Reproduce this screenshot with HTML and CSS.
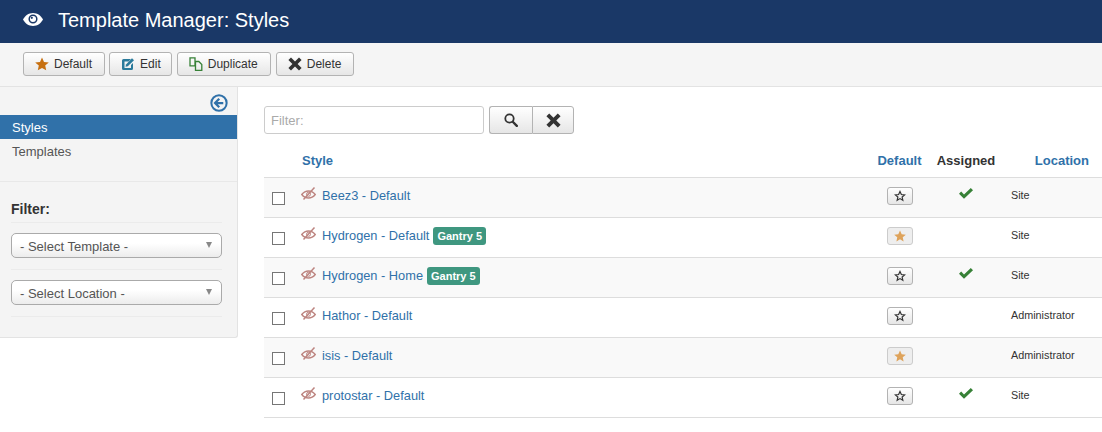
FILE: index.html
```html
<!DOCTYPE html>
<html>
  <head>
    <title>Template Manager: Styles</title>
    <link rel="stylesheet" href="styles.css">
  </head>
  <body>
    <svg class="defs" width="0" height="0">
      <symbol id="i-eye" viewBox="0 0 20 13">
        <path fill="#fff" d="M10 0C5.500 0 2 2.800 0 6.500 2 10.200 5.500 13 10 13s8-2.800 10-6.500C18 2.800 14.500 0 10 0z"/>
        <circle cx="10" cy="6" r="3.800" fill="none" stroke="#1a3867" stroke-width="1.500"/>
        <circle cx="8.800" cy="4.800" r="1.100" fill="#1a3867"/>
      </symbol>
      <symbol id="i-eye-off" viewBox="0 0 15 13">
        <g fill="none" stroke="currentColor">
          <path stroke-width="1.500" d="M.8 7.500C2.500 5.300 4.800 4 7.500 4S12.500 5.300 14.200 7.500C12.500 9.700 10.200 11 7.500 11S2.500 9.700 .8 7.500z"/>
          <circle cx="7.500" cy="7.300" r="2" stroke-width="1"/>
          <path stroke-width="1.500" d="M2.500 12.500 13.500.5"/>
        </g>
      </symbol>
      <symbol id="i-star" viewBox="0 0 14 14">
        <path fill="currentColor" d="M7 .5l2 4.400 4.800.5-3.600 3.200 1 4.700L7 10.900l-4.200 2.400 1-4.700L.2 5.400 5 4.900z"/>
      </symbol>
      <symbol id="i-star-o" viewBox="0 0 14 14">
        <path fill="none" stroke="currentColor" stroke-width="1.400" d="M7 1.800l1.600 3.500 3.800.4-2.900 2.500.8 3.700L7 10l-3.300 1.900.8-3.700-2.900-2.500 3.800-.4z"/>
      </symbol>
      <symbol id="i-times" viewBox="0 0 14 14">
        <path fill="currentColor" d="M3 .4 7 4.400l4-4 2.600 2.600-4 4 4 4L11 13.600l-4-4-4 4L.4 11l4-4-4-4z"/>
      </symbol>
      <symbol id="i-check" viewBox="0 0 14 11">
        <path fill="currentColor" d="M5 10.800 0 5.800l2.200-2.200L5 6.400 11.800 0 14 2.200z"/>
      </symbol>
    </svg>

    <header class="title-bar">
      <svg class="title-icon"><use href="#i-eye"/></svg>
      <h1>Template Manager: Styles</h1>
    </header>

    <div class="toolbar">
      <button class="btn"><svg class="ic ic-orange"><use href="#i-star"/></svg>Default</button>
      <button class="btn btn-edit">
        <svg class="ic ic-teal" viewBox="0 0 14 14">
          <path fill="currentColor" d="M2.500 2H10L7.500 4.500H3.500v6.500H10V8l2-2v5.500a1.500 1.500 0 0 1-1.500 1.500h-8A1.500 1.500 0 0 1 1 11.500v-8A1.500 1.500 0 0 1 2.500 2z"/>
          <path fill="currentColor" d="M5 7.500 11 1.200l2 2-6.200 6.100-2.300.4z"/>
        </svg>Edit
      </button>
      <button class="btn btn-dup">
        <svg class="ic ic-green" viewBox="0 0 14 14">
          <path fill="none" stroke="currentColor" stroke-width="1.300" d="M1 .9h5v8H1zM6.500 4.500h3.300l3 3v5.800H6.500z"/>
        </svg>Duplicate
      </button>
      <button class="btn btn-del"><svg class="ic"><use href="#i-times"/></svg>Delete</button>
    </div>

    <div class="page">
      <aside class="sidebar">
        <div class="collapse-row">
          <svg class="collapse-icon" viewBox="0 0 16 16">
            <circle cx="8" cy="8" r="6.800" fill="none" stroke="currentColor" stroke-width="1.800"/>
            <path fill="none" stroke="currentColor" stroke-width="2" d="M8.200 4.200 4.500 8l3.700 3.800M4.800 8h7"/>
          </svg>
        </div>
        <nav class="side-nav">
          <a class="side-link active">Styles</a>
          <a class="side-link">Templates</a>
        </nav>
        <div class="side-filter">
          <h4>Filter:</h4>
          <div class="select-wrap"><div class="fake-select">- Select Template -</div></div>
          <div class="select-wrap"><div class="fake-select">- Select Location -</div></div>
        </div>
      </aside>

      <main class="content">
        <div class="search-row">
          <input class="search-input" type="text" placeholder="Filter:">
          <div class="btn-group">
            <button class="btn-square">
              <svg class="ic-search" viewBox="0 0 14 14">
                <circle cx="5.500" cy="5.500" r="4.200" fill="none" stroke="currentColor" stroke-width="1.800"/>
                <path stroke="currentColor" stroke-width="2.400" stroke-linecap="round" d="M9 9l3.800 3.800"/>
              </svg>
            </button>
            <button class="btn-square"><svg class="ic-clear"><use href="#i-times"/></svg></button>
          </div>
        </div>

        <table class="styles-table">
          <thead>
            <tr>
              <th class="col-check"></th>
              <th class="col-style"><a>Style</a></th>
              <th class="col-default"><a>Default</a></th>
              <th class="col-assigned">Assigned</th>
              <th class="col-location"><a>Location</a></th>
            </tr>
          </thead>
          <tbody>
            <tr>
              <td><span class="check"></span></td>
              <td class="name"><div class="name-row"><svg class="eye-off"><use href="#i-eye-off"/></svg><a>Beez3 - Default</a></div></td>
              <td class="center"><span class="star-btn"><svg><use href="#i-star-o"/></svg></span></td>
              <td class="center"><svg class="tick"><use href="#i-check"/></svg></td>
              <td class="location">Site</td>
            </tr>
            <tr>
              <td><span class="check"></span></td>
              <td class="name"><div class="name-row"><svg class="eye-off"><use href="#i-eye-off"/></svg><a>Hydrogen - Default</a><span class="badge">Gantry 5</span></div></td>
              <td class="center"><span class="star-btn on"><svg><use href="#i-star"/></svg></span></td>
              <td class="center"></td>
              <td class="location">Site</td>
            </tr>
            <tr>
              <td><span class="check"></span></td>
              <td class="name"><div class="name-row"><svg class="eye-off"><use href="#i-eye-off"/></svg><a>Hydrogen - Home</a><span class="badge">Gantry 5</span></div></td>
              <td class="center"><span class="star-btn"><svg><use href="#i-star-o"/></svg></span></td>
              <td class="center"><svg class="tick"><use href="#i-check"/></svg></td>
              <td class="location">Site</td>
            </tr>
            <tr>
              <td><span class="check"></span></td>
              <td class="name"><div class="name-row"><svg class="eye-off"><use href="#i-eye-off"/></svg><a>Hathor - Default</a></div></td>
              <td class="center"><span class="star-btn"><svg><use href="#i-star-o"/></svg></span></td>
              <td class="center"></td>
              <td class="location">Administrator</td>
            </tr>
            <tr>
              <td><span class="check"></span></td>
              <td class="name"><div class="name-row"><svg class="eye-off"><use href="#i-eye-off"/></svg><a>isis - Default</a></div></td>
              <td class="center"><span class="star-btn on"><svg><use href="#i-star"/></svg></span></td>
              <td class="center"></td>
              <td class="location">Administrator</td>
            </tr>
            <tr>
              <td><span class="check"></span></td>
              <td class="name"><div class="name-row"><svg class="eye-off"><use href="#i-eye-off"/></svg><a>protostar - Default</a></div></td>
              <td class="center"><span class="star-btn"><svg><use href="#i-star-o"/></svg></span></td>
              <td class="center"><svg class="tick"><use href="#i-check"/></svg></td>
              <td class="location">Site</td>
            </tr>
          </tbody>
        </table>
      </main>
    </div>
  </body>
</html>
```

FILE: styles.css
```css
* {
  box-sizing: border-box;
}

body {
  margin: 0;
  background: #fff;
  color: #333;
  font-family: "Liberation Sans", Arial, sans-serif;
  font-size: 12px;
  overflow: hidden;
}

.defs {
  position: absolute;
}

a {
  color: #3071a9;
}

/* Title bar */
.title-bar {
  height: 43px;
  background: #1a3867;
  display: flex;
  align-items: center;
  padding-left: 23px;
  color: #fff;
}

.title-icon {
  width: 20px;
  height: 13px;
  margin-right: 15px;
  margin-top: -5px;
}

.title-bar h1 {
  margin: 0 0 3px;
  font-size: 20px;
  font-weight: normal;
}

/* Toolbar */
.toolbar {
  height: 44px;
  background: #f5f5f5;
  border-bottom: 1px solid #e3e3e3;
  display: flex;
  gap: 4px;
  padding: 9px 0 0 23px;
}

.btn {
  height: 24px;
  padding: 0 12px 0 11px;
  display: flex;
  align-items: center;
  gap: 5px;
  background: linear-gradient(#fff, #e6e6e6);
  border: 1px solid #b3b3b3;
  border-radius: 3px;
  color: #333;
  font: 12px "Liberation Sans", Arial, sans-serif;
}

.btn-edit {
  padding-right: 10px;
}

.btn-dup {
  margin-left: 1px;
}

.btn-del {
  margin-left: 1px;
}

.ic {
  width: 14px;
  height: 14px;
}

.ic-orange {
  color: #c77011;
}

.ic-teal {
  color: #2a7a9b;
}

.ic-green {
  color: #378137;
}

/* Sidebar */
.page {
  display: flex;
  align-items: flex-start;
}

.sidebar {
  width: 238px;
  height: 251px;
  flex-shrink: 0;
  background: #f4f4f4;
  border-right: 1px solid #e3e3e3;
  border-bottom: 1px solid #e3e3e3;
  border-bottom-right-radius: 3px;
}

.collapse-row {
  height: 28px;
  display: flex;
  justify-content: flex-end;
  padding: 7px 9px 0 0;
}

.collapse-icon {
  width: 18px;
  height: 18px;
  color: #3071a9;
}

.side-nav {
  height: 67px;
  border-bottom: 1px solid #e8e8e8;
}

.side-link {
  display: block;
  height: 24px;
  line-height: 25px;
  padding-left: 12px;
  color: #555;
  font-size: 13px;
}

.side-link.active {
  background: #3071a9;
  color: #fff;
}

.side-filter {
  padding: 19px 15px 0 11px;
}

.side-filter h4 {
  margin: 0;
  height: 22px;
  font-size: 14px;
  line-height: 16px;
  border-bottom: 1px solid #ebebeb;
}

.select-wrap {
  height: 47px;
  padding-top: 10px;
  border-bottom: 1px solid #ebebeb;
}

.fake-select {
  position: relative;
  height: 25px;
  line-height: 25px;
  padding-left: 8px;
  background: linear-gradient(#fff 40%, #ececec);
  border: 1px solid #aaa;
  border-radius: 5px;
  color: #555;
  font-size: 13px;
}

.fake-select::after {
  content: "";
  position: absolute;
  right: 9px;
  top: 8px;
  border-left: 3.500px solid transparent;
  border-right: 3.500px solid transparent;
  border-top: 6px solid #888;
}

/* Main */
.content {
  flex: 1;
  padding: 19px 0 0 26px;
}

.search-row {
  display: flex;
  gap: 5px;
  height: 28px;
}

.search-input {
  width: 220px;
  height: 28px;
  padding: 0 6px;
  background: #fff;
  border: 1px solid #ccc;
  border-radius: 3px;
  font: 13px "Liberation Sans", Arial, sans-serif;
}

.search-input::placeholder {
  color: #aaa;
}

.btn-group {
  display: flex;
}

.btn-square {
  width: 43px;
  height: 28px;
  display: flex;
  align-items: center;
  justify-content: center;
  padding: 0;
  background: linear-gradient(#fff, #e6e6e6);
  border: 1px solid #b3b3b3;
  color: #333;
}

.btn-square:first-child {
  border-right: 0;
  border-radius: 3px 0 0 3px;
}

.btn-square:last-child {
  width: 42px;
  border-radius: 0 3px 3px 0;
}

.ic-search {
  width: 14px;
  height: 14px;
}

.ic-clear {
  width: 15px;
  height: 15px;
}

/* Table */
.styles-table {
  margin-top: 9px;
  width: 100%;
  table-layout: fixed;
  border-collapse: collapse;
}

.styles-table th {
  height: 34px;
  padding: 1px 0 0;
  font-size: 13px;
  text-align: left;
  border-bottom: 1px solid #ddd;
}

.col-check {
  width: 38px;
}

.col-default {
  width: 66px;
}

.col-assigned {
  width: 66px;
}

.col-location {
  width: 103px;
}

.styles-table th.col-default {
  text-align: center;
  padding-right: 1px;
}

.styles-table th.col-assigned {
  text-align: center;
}

.styles-table th.col-location {
  text-align: right;
  padding-right: 13px;
}

.styles-table td {
  height: 40px;
  padding: 0 0 6px;
  border-bottom: 1px solid #ddd;
  font-size: 12.800px;
  vertical-align: middle;
}

.styles-table td.name {
  padding-bottom: 4px;
}

.name-row {
  display: flex;
  align-items: center;
  height: 18px;
}

.styles-table tbody tr:nth-child(odd) {
  background: #f9f9f9;
}

.check {
  display: block;
  width: 13px;
  height: 13px;
  margin: 8px 0 0 8px;
  background: #fff;
  border: 1px solid #767676;
}

.eye-off {
  width: 15px;
  height: 13px;
  margin: 0 6px 4px -1px;
  color: #bd8580;
}

.center {
  text-align: center;
}

.star-btn {
  display: inline-flex;
  align-items: center;
  justify-content: center;
  width: 26px;
  height: 18px;
  margin-top: 3px;
  vertical-align: middle;
  background: linear-gradient(#fff, #e6e6e6);
  border: 1px solid #b3b3b3;
  border-radius: 3px;
  color: #333;
}

.star-btn svg {
  width: 12px;
  height: 12px;
}

.star-btn.on {
  background: #eee;
  border-color: #ccc;
  color: #dea35b;
}

.tick {
  width: 14px;
  height: 11px;
  color: #378137;
}

.badge {
  height: 18px;
  line-height: 18px;
  margin: 2px 0 0 4px;
  padding: 0 4px;
  background: #3f9780;
  border-radius: 3px;
  color: #fff;
  font-size: 11px;
  font-weight: bold;
}

.styles-table td.location {
  padding: 2px 0 6px 12px;
  font-size: 10.800px;
}
```
